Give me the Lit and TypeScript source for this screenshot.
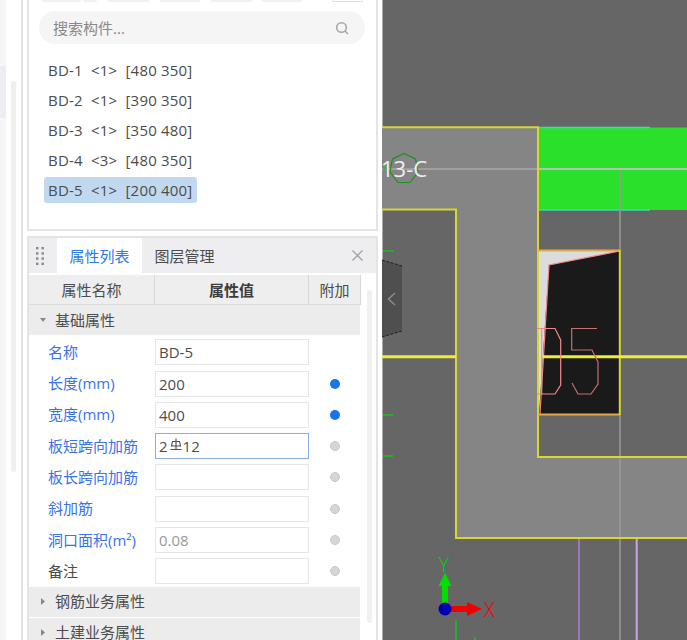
import { LitElement, html, css, svg } from 'lit';
import { customElement } from 'lit/decorators.js';

const components = ['BD-1  <1>  [480 350]', 'BD-2  <1>  [390 350]', 'BD-3  <1>  [350 480]', 'BD-4  <3>  [480 350]', 'BD-5  <1>  [200 400]'];

// clipped toolbar buttons along the top edge: [gap before, width]
const tools = [[3, 39], [2, 14], [11, 41], [11, 40], [11, 41], [10, 40]];

const rows = [
  { name: '名称', value: 'BD-5', blue: true },
  { name: '长度(mm)', value: '200', blue: true, dot: 'on' },
  { name: '宽度(mm)', value: '400', blue: true, dot: 'on' },
  { name: '板短跨向加筋', value: '2|12', blue: true, dot: 'off', focus: true },
  { name: '板长跨向加筋', value: '', blue: true, dot: 'off' },
  { name: '斜加筋', value: '', blue: true, dot: 'off' },
  { name: '洞口面积(m²)', value: '0.08', blue: true, dot: 'off', muted: true },
  { name: '备注', value: '', dot: 'off' },
];

@customElement('app-root')
export class AppRoot extends LitElement {
  static styles = css`
    :host {
      display: flex;
      width: 687px;
      height: 640px;
      overflow: hidden;
      background: #fff;
      font-family: 'Open Sans', 'Noto Sans CJK SC', sans-serif;
      font-size: 15px;
      color: #4c4c4c;
    }
    .gutter {
      width: 27px;
      height: 640px;
      flex: none;
      display: flex;
    }
    .gutter-left {
      width: 6px;
      height: 640px;
      background: linear-gradient(#f5f6f8 66px, #eceef2 66px, #eceef2 118px, #f5f6f8 118px);
    }
    .gutter-track {
      width: 5px;
      margin-left: 5px;
      height: 391px;
      margin-top: 81px;
      background: #efefef;
      border-radius: 3px;
    }
    .gutter-line {
      width: 2px;
      margin-left: 5px;
      background: #e4e4e4;
    }
    .panels {
      width: 351px;
      flex: none;
      display: flex;
      flex-direction: column;
      gap: 5px;
    }
    .top {
      height: 231px;
      flex: none;
      box-sizing: border-box;
      border: 2px solid #e4e4e4;
      border-top: 0;
      padding: 0 11px 0 10px;
    }
    .tools {
      height: 2px;
      display: flex;
      margin-bottom: 9px;
    }
    .tools span {
      background: #f0f0f0;
      border-radius: 0 0 3px 3px;
    }
    .tools .boxed {
      margin-left: 30px;
      width: 29px;
      border: 1px solid #dedede;
      border-top: 0;
      background: #fff;
    }
    .search {
      height: 33px;
      border-radius: 16px;
      background: #f5f5f5;
      display: flex;
      align-items: center;
      justify-content: space-between;
      padding: 0 16px 0 14px;
      color: #888;
    }
    .list {
      list-style: none;
      margin: 13px 0 0 5px;
      padding: 0;
      display: flex;
      flex-direction: column;
      gap: 4px;
    }
    .list li {
      height: 26px;
      line-height: 26px;
      padding: 0 5px 0 4px;
      align-self: flex-start;
      border-radius: 3px;
      letter-spacing: 0.2px;
      white-space: pre;
    }
    .list li.active {
      background: #c0d9f1;
    }
    .props {
      flex: 1;
      min-height: 0;
      box-sizing: border-box;
      border: 2px solid #e4e4e4;
      border-bottom: 0;
      overflow: hidden;
    }
    .tabs {
      height: 35px;
      background: #eeeef0;
      display: flex;
      align-items: stretch;
      margin-bottom: 2px;
    }
    .grip {
      width: 22px;
      padding-right: 6px;
      display: flex;
      align-items: center;
      justify-content: center;
    }
    .tab {
      width: 85px;
      display: flex;
      align-items: center;
      justify-content: center;
      padding-bottom: 1px;
      box-sizing: border-box;
    }
    .tab.active {
      background: #fff;
      color: #2f78ec;
    }
    .close {
      margin-left: auto;
      width: 38px;
      display: flex;
      align-items: center;
      justify-content: center;
    }
    .body {
      display: flex;
    }
    .table {
      width: 332px;
      flex: none;
    }
    .head {
      display: grid;
      grid-template-columns: 126px 154px 52px;
      height: 29px;
      background: #eeeeee;
      border-bottom: 1px solid #dcdcdc;
    }
    .head div {
      display: flex;
      align-items: center;
      justify-content: center;
      border-right: 1px solid #d8d8d8;
    }
    .head .strong {
      font-weight: 700;
      color: #3c3c3c;
    }
    .group {
      height: 30px;
      width: 331px;
      background: #ececec;
      display: flex;
      align-items: center;
      gap: 9px;
      padding-left: 11px;
      box-sizing: border-box;
      margin-bottom: 1px;
    }
    .group span {
      margin-top: -2px;
    }
    .group.first {
      margin-bottom: 1.6px;
    }
    .row {
      display: grid;
      grid-template-columns: 126px 154px 52px;
      height: 31.3px;
      align-items: center;
    }
    .row .name {
      padding: 0 0 2px 19px;
    }
    .row .name.blue {
      color: #3a72e8;
    }
    .box {
      height: 26px;
      box-sizing: border-box;
      border: 1.5px solid #e6e6e6;
      padding: 0 3px;
      display: flex;
      align-items: center;
    }
    .box.focus {
      border-color: #8aaee6;
    }
    .box.muted {
      color: #999;
    }
    .dot {
      width: 10px;
      height: 10px;
      border-radius: 50%;
      justify-self: center;
    }
    .dot.on {
      background: #1a73e8;
    }
    .dot.off {
      background: #d6d6d6;
      border: 1px solid #c8c8c8;
      box-sizing: border-box;
    }
    .rebar {
      width: 12px;
      height: 13px;
      margin: -3px 1px 0 2px;
    }
    .scroll {
      width: 5px;
      margin: 15px 0 0 6px;
      height: 333px;
      background: #f0f0f0;
      border-radius: 3px;
    }
    .divider {
      width: 4px;
      flex: none;
    }
    .canvas {
      width: 305px;
      height: 640px;
      flex: none;
    }
    .canvas svg {
      display: block;
    }
    .canvas text {
      font-family: 'Open Sans', sans-serif;
    }
  `;

  private renderValue(value: string) {
    if (!value.includes('|')) return value;
    const [a, b] = value.split('|');
    return html`${a}<svg class="rebar" viewBox="0 0 12 13" fill="none" stroke="#4c4c4c" stroke-width="1.100">
        <path d="M6 0.500V11.500M0.500 11.500H11.500M2.500 3.500H9.500L10.500 8H1.500Z" />
      </svg>${b}`;
  }

  private renderViewport() {
    const yellow = '#d9d62e';
    return svg`
      <rect width="305" height="640" fill="#666" />
      <rect width="1" height="640" fill="#a8a8a8" />
      <path d="M0 127H156V457H305V538H74V210H0Z" fill="#858585" />
      <rect x="157" y="127.500" width="148" height="82.500" fill="#2be02b" />
      <rect x="156" y="250.500" width="82" height="164" fill="#dcdcdc" />
      <path d="M167 265L238 251V414H157Z" fill="#1a1a1a" />
      <path d="M238 251L167 265L158 414" stroke="#f08a8a" stroke-width="1.200" fill="none" />
      <path d="M157 127.500H268M157 210H268" stroke="#3ad6c4" stroke-width="1.500" fill="none" />
      <path d="M0 169H305" stroke="#a8a8a8" stroke-width="1.500" />
      <path d="M157 169H305" stroke="#c4c4c4" stroke-width="1.500" />
      <path d="M238 170V250M238 415V640" stroke="#999" stroke-width="1.500" />
      <path d="M197 538V640" stroke="#9a78c0" stroke-width="2" />
      <path d="M254.700 538V640" stroke="#c8a8e0" stroke-width="2" />
      <path d="M0 127.300H156V457H305M0 209.500H74V538H305" fill="none" stroke="${yellow}" stroke-width="2" />
      <path d="M156 250.500H238M156 414.500H238" fill="none" stroke="#e8a84a" stroke-width="2" />
      <path d="M237.800 250V415" fill="none" stroke="${yellow}" stroke-width="2" />
      <path d="M0 356.800H74M159 356.800H305" stroke="#f0ee30" stroke-width="3" />
      <path d="M155 328.500H173L178.700 340V385L173 394H155M159.700 328.500V394" fill="none" stroke="#f08a8a" stroke-width="1.200" />
      <path d="M215 328.500H189.700V350H210L216 362V384L209 394H196L190 383" fill="none" stroke="#c47070" stroke-width="1.200" />
      <path d="M0 260L20 266V331L0 337Z" fill="#4f4f4f" />
      <path d="M0 260L20 266M20 331L0 337" fill="none" stroke="#222" stroke-dasharray="3 1.500" />
      <path d="M13 293L6.500 299L13 305" fill="none" stroke="#8c8c8c" stroke-width="1.500" />
      <path d="M1 251H11M1 415H11M1 456H11M1 169H6" stroke="#1fc01f" stroke-width="1.500" />
      <path d="M22 153.500L33.500 159L36 172L28 182.500H16L8 172L10.500 159Z" fill="none" stroke="#1f8f1f" stroke-width="1.200" />
      <text x="-1" y="177" font-size="22" fill="#eee">13-C</text>
      <path d="M63 609V585" stroke="#00e000" stroke-width="6" />
      <path d="M63 572.700L69.500 586H56.500Z" fill="#00e000" />
      <path d="M63 609H87" stroke="#f00000" stroke-width="6" />
      <path d="M100 609L85 602V616Z" fill="#f00000" />
      <circle cx="63" cy="609" r="6.500" fill="#0000b0" />
      <text x="56.500" y="571.500" font-size="20" font-weight="300" fill="#00d000">Y</text>
      <text x="102" y="617" font-size="20" font-weight="300" fill="#f00000">X</text>
      <path d="M74 620V640M93 637V640" stroke="#1fc01f" stroke-width="1.500" />
    `;
  }

  render() {
    return html`
      <div class="gutter">
        <div class="gutter-left"></div>
        <div class="gutter-track"></div>
        <div class="gutter-line"></div>
      </div>
      <div class="panels">
        <section class="top">
          <div class="tools">
            ${tools.map(([gap, w]) => html`<span style="margin-left:${gap}px;width:${w}px"></span>`)}
            <span class="boxed"></span>
          </div>
          <div class="search">
            <span>搜索构件...</span>
            <svg width="14" height="14" viewBox="0 0 14 14" fill="none" stroke="#a8a8a8" stroke-width="1.600">
              <circle cx="6.500" cy="6.500" r="4.800" /><path d="M10 10L13 13" />
            </svg>
          </div>
          <ul class="list">
            ${components.map((c, i) => html`<li class=${i === 4 ? 'active' : ''}>${c}</li>`)}
          </ul>
        </section>
        <section class="props">
          <div class="tabs">
            <div class="grip">
              <svg width="8" height="18" viewBox="0 0 8 18" fill="#888">
                ${[0, 1, 2, 3].map(r => [0, 1].map(c => svg`<rect x=${c * 5.500} y=${r * 5.200} width="2.400" height="2.400" />`))}
              </svg>
            </div>
            <div class="tab active">属性列表</div>
            <div class="tab">图层管理</div>
            <div class="close">
              <svg width="11" height="11" viewBox="0 0 11 11" stroke="#a0a0a0" stroke-width="1.300"><path d="M.5 .5L10.500 10.500M10.500 .5L.5 10.500" /></svg>
            </div>
          </div>
          <div class="body">
            <div class="table">
              <div class="head">
                <div>属性名称</div>
                <div class="strong">属性值</div>
                <div>附加</div>
              </div>
              <div class="group first">
                <svg width="6" height="4" viewBox="0 0 6 4" fill="#888"><path d="M0 0H6L3 4Z" /></svg>
                <span>基础属性</span>
              </div>
              ${rows.map(r => html`
                <div class="row">
                  <div class="name ${r.blue ? 'blue' : ''}">${r.name}</div>
                  <div class="box ${r.focus ? 'focus' : ''} ${r.muted ? 'muted' : ''}">${this.renderValue(r.value)}</div>
                  ${r.dot ? html`<div class="dot ${r.dot}"></div>` : html`<div></div>`}
                </div>
              `)}
              <div class="group">
                <svg width="6" height="7" viewBox="0 0 6 7" fill="#888"><path d="M1 0V7L5 3.500Z" /></svg>
                <span>钢筋业务属性</span>
              </div>
              <div class="group">
                <svg width="6" height="7" viewBox="0 0 6 7" fill="#888"><path d="M1 0V7L5 3.500Z" /></svg>
                <span>土建业务属性</span>
              </div>
            </div>
            <div class="scroll"></div>
          </div>
        </section>
      </div>
      <div class="divider"></div>
      <div class="canvas">
        <svg width="305" height="640" viewBox="0 0 305 640">${this.renderViewport()}</svg>
      </div>
    `;
  }
}
